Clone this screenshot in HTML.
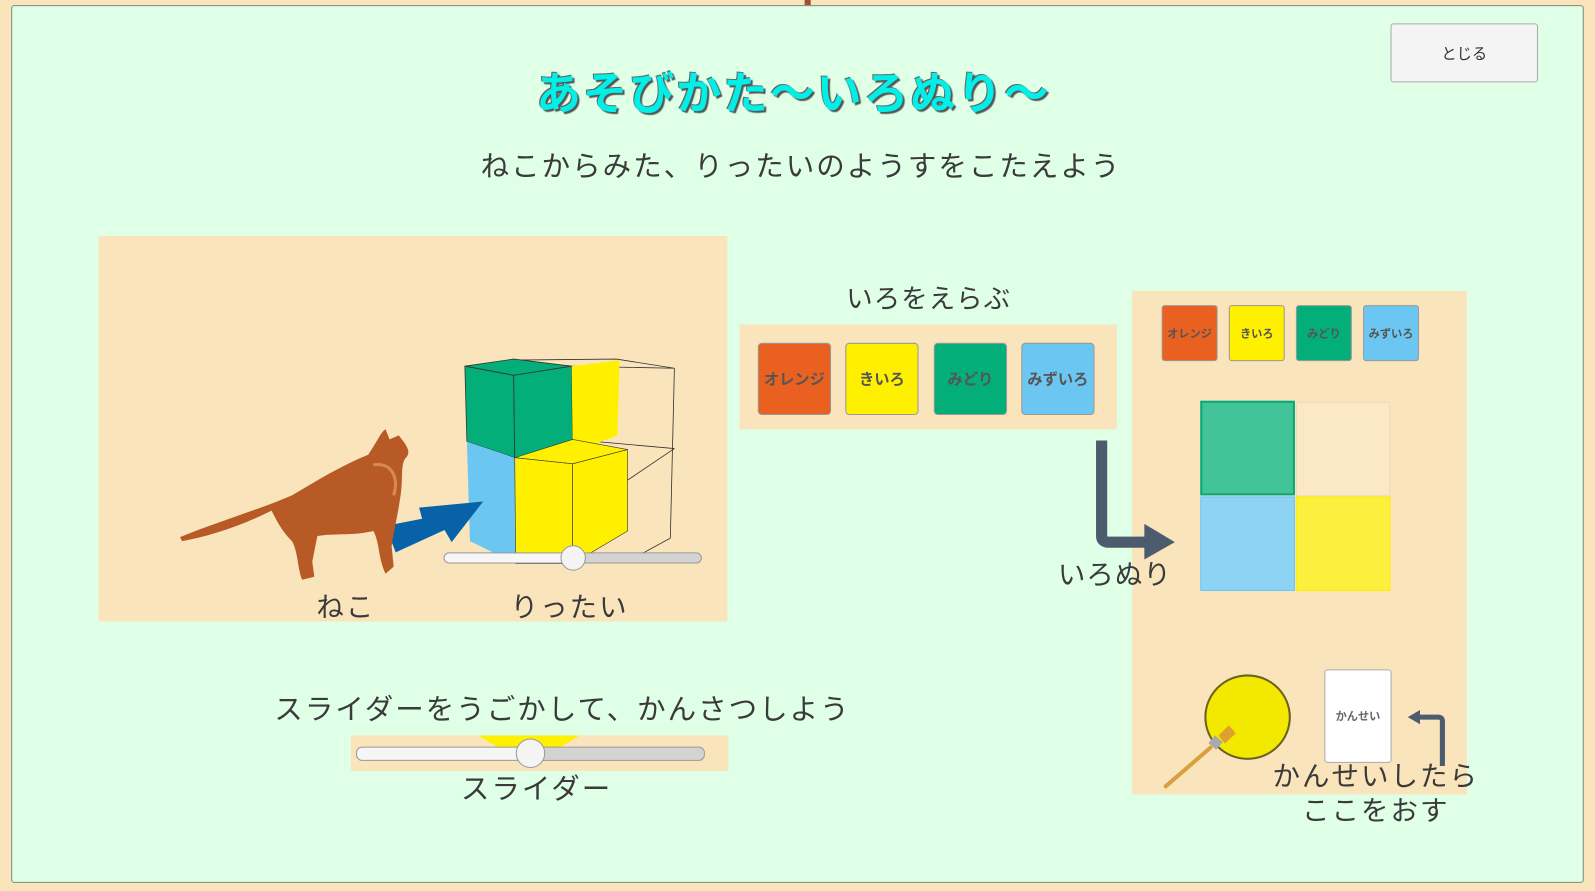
<!DOCTYPE html>
<html><head><meta charset="utf-8"><style>
*{margin:0;padding:0;box-sizing:border-box}
body{width:1595px;height:891px;background:#f9e4bb;position:relative;overflow:hidden;font-family:"Liberation Sans","Noto Sans CJK JP",sans-serif;color:#3a3a3a}
#w{position:absolute;left:0;top:0;width:1568px;height:876px;transform:scale(1.0172);transform-origin:0 0}
.abs{position:absolute}
#panel{left:11px;top:5px;width:1571px;height:877px;background:#dfffe6;border:1px solid #7a8a80;border-radius:3px}
.t{position:absolute;white-space:nowrap;text-align:center}
.btn{position:absolute;border:1px solid #999;border-radius:4px;font-weight:bold;font-size:15px;display:flex;align-items:center;justify-content:center;color:#555}
.sb{position:absolute;border:1px solid #999;border-radius:3px;font-weight:bold;font-size:11px;display:flex;align-items:center;justify-content:center;color:#555}
.track{position:absolute;height:11px;border:1px solid #999;border-radius:6px;background:linear-gradient(to right,#f6f6f6 var(--p),#d3d3d3 var(--p))}
.knob{position:absolute;width:25px;height:25px;border-radius:50%;background:#f4f4f4;border:1px solid #999}
</style></head><body><div id="w">
<div class="abs" style="left:791px;top:0;width:6px;height:5px;background:#a0522d"></div>
<div class="abs" style="left:11px;top:5px;width:1546px;height:863px;background:#dfffe6;border:1px solid #7a8a80;border-radius:3px"></div>
<div class="abs" style="left:1367px;top:23px;width:145px;height:58px;background:#f4f4f4;border:1px solid #aaa;border-radius:3px;display:flex;align-items:center;justify-content:center;font-size:15px;color:#333">とじる</div>
<div class="t" style="left:380px;width:800px;top:56px;font-size:44px;font-weight:bold;letter-spacing:2px;color:#00f0e8;text-shadow:2px 2px 1px #555,-1px -1px 0 #666">あそびかた～いろぬり～</div>
<div class="t" style="left:380px;width:815px;top:142px;font-size:28px;letter-spacing:2px;color:#3a3a3a">ねこからみた、りったいのようすをこたえよう</div>

<div class="abs" style="left:97px;top:232px;width:618px;height:379px;background:#f9e4bb"></div>
<svg class="abs" style="left:97px;top:232px" width="618" height="379">
<g fill="none" stroke="#333" stroke-width="0.8">
<polygon points="409,122 462,128 566,130 509,121"/>
<line x1="566" y1="130" x2="562" y2="297"/>
<line x1="462" y1="128" x2="466" y2="290"/>
<line x1="466" y1="200" x2="566" y2="209"/>
<line x1="566" y1="209" x2="520" y2="240"/>
<line x1="562" y1="297" x2="520" y2="320"/>
</g>
<polygon points="360,128 408,121 465,128 408,137" fill="#04ae79" stroke="#333" stroke-width="0.8"/>
<polygon points="360,128 408,137 409,218 362,202" fill="#04ae79" stroke="#333" stroke-width="0.8"/>
<polygon points="408,137 465,128 466,213 409,218" fill="#04ae79" stroke="#333" stroke-width="0.8"/>
<polygon points="465,128 512,122 510,196 466,213" fill="#fff000"/>
<polygon points="362,202 409,218 410,322 365,300" fill="#6cc6f2"/>
<polygon points="409,218 466,200 520,210 466,224" fill="#fff000" stroke="#333" stroke-width="0.6"/>
<polygon points="409,218 466,224 466,322 410,322" fill="#fff000" stroke="#333" stroke-width="0.6"/>
<polygon points="466,224 520,210 520,290 466,322" fill="#fff000" stroke="#333" stroke-width="0.6"/>
<polygon points="282,285 318,278 315,267 378,261 347,301 340,289 292,311" fill="#0862a8"/>
<g fill="#b85a25">
<path d="M80,296 C120,280 160,268 190,255 C215,240 240,225 265,215 C275,200 278,192 282,190 L286,200 L295,196 C302,205 308,212 302,218 C296,225 300,240 296,260 C294,275 290,290 288,305 L290,325 L282,332 C275,318 276,300 270,290 C250,295 230,292 215,295 L210,320 L212,335 L200,338 C195,325 196,310 190,300 C180,290 175,280 170,270 C140,285 110,295 82,300 Z"/>
</g>
<path d="M270,225 C290,222 295,240 290,255" stroke="#d98a50" stroke-width="3" fill="none"/>
</svg>
<div class="track" style="--p:50%;left:436px;top:543px;width:254px"></div>
<div class="knob" style="left:551px;top:536px"></div>
<div class="t" style="left:300px;width:80px;top:575px;font-size:27px;letter-spacing:2px">ねこ</div>
<div class="t" style="left:490px;width:140px;top:575px;font-size:27px;letter-spacing:2px">りったい</div>

<div class="t" style="left:813px;width:200px;top:274px;font-size:26px;letter-spacing:1px">いろをえらぶ</div>
<div class="abs" style="left:727px;top:319px;width:371px;height:103px;background:#f9e4bb"></div>
<div class="btn" style="left:745px;top:337px;width:72px;height:71px;background:#e96020">オレンジ</div>
<div class="btn" style="left:831px;top:337px;width:72px;height:71px;background:#fff000">きいろ</div>
<div class="btn" style="left:918px;top:337px;width:72px;height:71px;background:#04ae79">みどり</div>
<div class="btn" style="left:1004px;top:337px;width:72px;height:71px;background:#6cc6f2">みずいろ</div>

<div class="abs" style="left:1113px;top:286px;width:329px;height:495px;background:#f9e4bb"></div>
<svg class="abs" style="left:1070px;top:425px" width="100" height="130">
<path d="M13,8 L13,102 Q13,108 20,108 L58,108" stroke="#4d5b6e" stroke-width="11" fill="none"/>
<polygon points="55,90 85,108 55,125" fill="#4d5b6e"/>
</svg>
<div class="t" style="left:1036px;width:120px;top:543px;font-size:27px;letter-spacing:1px">いろぬり</div>

<div class="sb" style="left:1142px;top:300px;width:55px;height:55px;background:#e96020">オレンジ</div>
<div class="sb" style="left:1208px;top:300px;width:55px;height:55px;background:#fff000">きいろ</div>
<div class="sb" style="left:1274px;top:300px;width:55px;height:55px;background:#04ae79">みどり</div>
<div class="sb" style="left:1340px;top:300px;width:55px;height:55px;background:#6cc6f2">みずいろ</div>
<div class="abs" style="left:1180px;top:394px;width:93px;height:93px;background:#42c398;border:2px solid #0aa878"></div>
<div class="abs" style="left:1274px;top:395px;width:93px;height:93px;background:#fbe9c6;border:1px solid #f0d8b0;border-radius:3px"></div>
<div class="abs" style="left:1180px;top:488px;width:93px;height:93px;background:#8dd3f4;border:1px solid #6cc6f2"></div>
<div class="abs" style="left:1274px;top:488px;width:93px;height:93px;background:#fdef3e;border:1px solid #fff000"></div>
<div class="abs" style="left:1184px;top:663px;width:85px;height:84px;border-radius:50%;background:#f3e800;border:2px solid #6b6020"></div>
<svg class="abs" style="left:1140px;top:705px" width="80" height="75">
<line x1="6" y1="68" x2="50" y2="30" stroke="#d9a040" stroke-width="4" stroke-linecap="round"/>
<rect x="50" y="20" width="10" height="10" fill="#aaa" transform="rotate(40 55 25)"/>
<polygon points="58,18 68,8 75,16 64,26" fill="#e0a030"/>
</svg>
<div class="abs" style="left:1302px;top:658px;width:66px;height:92px;background:#fff;border:1px solid #aaa;border-radius:3px;display:flex;align-items:center;justify-content:center;font-size:11px;font-weight:bold;color:#666">かんせい</div>
<svg class="abs" style="left:1380px;top:695px" width="45" height="60">
<path d="M38,58 L38,14 Q38,10 34,10 L14,10" stroke="#4d5b6e" stroke-width="5" fill="none"/>
<polygon points="4,10 16,3 16,17" fill="#4d5b6e"/>
</svg>
<div class="t" style="left:1240px;width:225px;top:746px;font-size:27px;line-height:34px;letter-spacing:2px">かんせいしたら<br>ここをおす</div>

<div class="t" style="left:263px;width:580px;top:676px;font-size:28px;letter-spacing:2px">スライダーをうごかして、かんさつしよう</div>
<div class="abs" style="left:345px;top:723px;width:371px;height:35px;background:#f9e4bb"></div>
<svg class="abs" style="left:470px;top:723px" width="100" height="12"><polygon points="0,0 100,0 80,12 20,12" fill="#fff000"/></svg>
<div class="track" style="--p:50%;left:350px;top:734px;width:343px;height:14px"></div>
<div class="knob" style="left:507px;top:726px;width:29px;height:29px"></div>
<div class="t" style="left:440px;width:175px;top:754px;font-size:28px;letter-spacing:2px">スライダー</div>
</div></body></html>
